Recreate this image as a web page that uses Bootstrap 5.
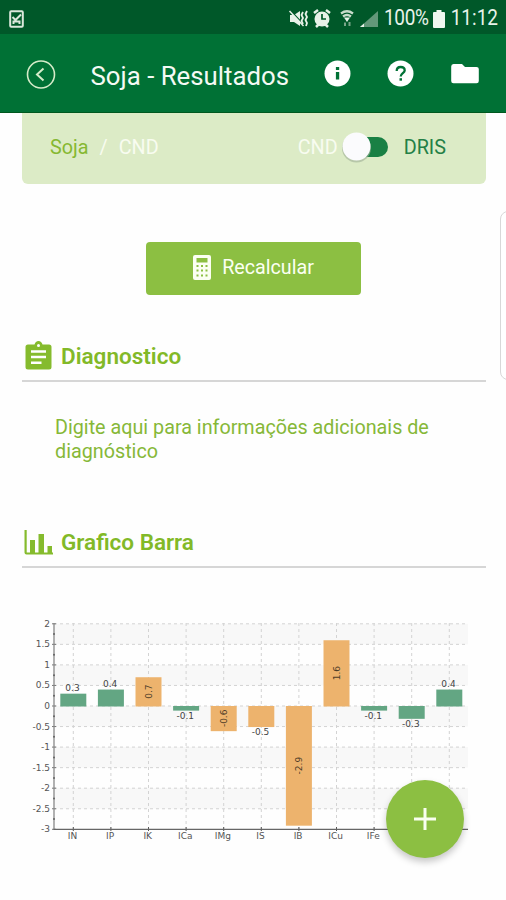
<!DOCTYPE html>
<html lang="pt-BR">
<head>
<meta charset="utf-8">
<meta name="viewport" content="width=device-width, initial-scale=1">
<title>Soja - Resultados</title>
<link href="https://cdn.jsdelivr.net/npm/bootstrap@5.3.0/dist/css/bootstrap.min.css" rel="stylesheet">
<style>
body{font-family:Roboto,"Liberation Sans",sans-serif;background:#fefefe;width:506px;height:900px;overflow:hidden}
svg{display:block;flex:none}
.status-strip{height:34px;background:#005829;color:#e8f2e9;padding:3px 8px 0 9px}
.status-strip .pct,.status-strip .clock{font-size:19px;margin-left:6px;transform:scaleY(1.12)}
.status-strip .pct{letter-spacing:-.3px}
.app-head{height:79px;background:#007135;border-bottom:1px solid #00581f;padding:0 26px}
.app-head h1{font-size:25.8px;font-weight:400;color:#f4faf4;margin:7px 0 0 34.500px;white-space:nowrap}
.method-box{height:71px;margin:0 20px 0 22px;background:#dcebc6;border-radius:0 0 6px 6px;padding:0 40px 3px 28px;font-size:19.8px}
.method-box span{padding-top:2px}
.method-box .pale{color:#f8fcf0}
.method-box .slash{margin:0 11px}
.lime{color:#86b832}
.forest{color:#248047}
.method-box .forest{margin-left:17px}
.switch-pill{width:45px;height:30px}
.recalc{width:215px;height:53px;background:#8cbf42;color:#fbfff2;border-radius:4px;margin:58px 0 0 146px;font-size:19.7px;padding:0 0 3px 0;border:0}
.recalc span{padding-top:2px;margin-left:11px}
.recalc:hover{background:#7fb338;color:#fff}
.section-title{margin:37px 20px 0 22px;border-bottom:2px solid #d6d6d6;height:50px;color:#82b928}
.section-title.second{margin-top:5px}
.section-title h2{font-size:22.5px;font-weight:600;margin:1px 0 0 6px;white-space:nowrap}
.note{margin:34px 40px 0 55px;height:97px;font-size:19.75px;line-height:24px;color:#86b838}
.edge-panel{position:absolute;left:500px;top:211px;width:20px;height:169px;border:1px solid #d8d8d8;border-radius:8px;background:#fff}
.chart{margin-left:22px;margin-top:32px}
.chart text{font-family:"DejaVu Sans",sans-serif;font-size:9px;fill:#555}
.fab{position:absolute;left:386px;top:780px;width:78px;height:78px;background:#8cbf42;box-shadow:0 4px 7px rgba(0,0,0,.22);border:0;padding:0}
</style>
<script src="https://cdn.jsdelivr.net/npm/bootstrap@5.3.0/dist/js/bootstrap.bundle.min.js"></script>
</head>
<body class="position-relative">
<div class="status-strip d-flex align-items-center">
  <svg width="15" height="18" viewBox="0 0 15 18"><rect x="1.2" y="1.2" width="12.6" height="15.6" rx="1" fill="none" stroke="#dbe8dc" stroke-width="2"/><path d="M3.500 7l3 3 5.500-5.500M4.500 14v-2.500h6V14" fill="none" stroke="#dbe8dc" stroke-width="2"/></svg>
  <svg class="ms-auto" width="90" height="20" viewBox="288 8 90 20" fill="#e8f2e9">
    <path d="M290 14h4l6-4v15l-6-4h-4z"/><path d="M290.500 9.500l14 15" stroke="#005829" stroke-width="1.500"/><path d="M289.500 10l14 15" stroke="#e8f2e9" stroke-width="1.500"/><path d="M303 11l-1.500 3 1.500 3-1.500 3 1.500 3M307 10l-1.500 3 1.500 3-1.500 3 1.500 3 -1 3" fill="none" stroke="#e8f2e9" stroke-width="1.800"/>
    <circle cx="322" cy="18" r="7.500"/><path d="M314 12l4-3M330 12l-4-3M316 26l3-3M328 26l-3-3" stroke="#e8f2e9" stroke-width="2.500"/><path d="M322 13v5h4" stroke="#005829" stroke-width="1.700" fill="none"/>
    <path d="M341 12.500q6-4.500 12 0M343 15.500q4-3 8 0" fill="none" stroke="#c8dccb" stroke-width="2.200"/><path d="M344 16.500h6L347 21z"/><path d="M345 25v-3.500M349.500 21v4" stroke="#78a588" stroke-width="2"/>
    <path d="M378 10v16h-18z" fill="#63987a"/><path d="M360 26l4-3.500V26z"/>
  </svg>
  <span class="pct">100%</span>
  <svg class="ms-1" width="12" height="18" viewBox="0 0 12 18" fill="#f0f7f0"><path d="M3.500 0h5v2H11q1 0 1 1v14q0 1-1 1H1q-1 0-1-1V3q0-1 1-1h2.500z"/></svg>
  <span class="clock">11:12</span>
</div>
<header class="app-head d-flex align-items-center">
  <svg class="mt-1" width="30" height="30" viewBox="0 0 30 30" fill="none" stroke="#d5ecc9"><circle cx="15" cy="14.500" r="13.500" stroke-width="1.600"/><path d="M17.500 8.500l-6.500 6 6.500 6" stroke-width="2"/></svg>
  <h1>Soja - Resultados</h1>
  <svg class="ms-auto" width="156" height="28" viewBox="324 59.500 156 28" fill="#fff"><circle cx="337.500" cy="74" r="13"/><path d="M335.900 67.500h3.300v3h-3.300zM335.900 72.500h3.300v7.500h-3.300z" fill="#007135"/><circle cx="400.500" cy="74" r="13"/><path d="M396.700 71.500q0-4 4-4t4 3.500c0 2.500-4 3-4 6" fill="none" stroke="#007135" stroke-width="2.300"/><path d="M399.500 78.700h2.500v2.500h-2.500z" fill="#007135"/><path d="M453.500 64.500h8.500l3 3h11.500q2.300 0 2.300 2v12q0 2.300-2.300 2.300h-23q-2.300 0-2.300-2.300v-14.500q0-2.500 2.300-2.500z"/></svg>
</header>
<main>
  <div class="method-box d-flex align-items-center">
    <span class="lime">Soja</span><span class="pale slash">/</span><span class="pale">CND</span>
    <span class="pale ms-auto me-1">CND</span>
    <svg class="switch-pill overflow-visible" viewBox="0 0 45 30"><rect x="8" y="5" width="38" height="20" rx="10" fill="#198044"/><ellipse cx="14.500" cy="16" rx="14.500" ry="14.500" fill="#9eaf96" opacity=".6"/><circle cx="14.500" cy="14.500" r="14" fill="#fbfbfd"/></svg>
    <span class="forest">DRIS</span>
  </div>
  <button class="btn recalc d-flex align-items-center justify-content-center" type="button">
    <svg width="18" height="25" viewBox="0 0 18 25"><rect width="18" height="25" rx="2" fill="#fbfff2"/><g fill="#8cbf42"><path d="M3.500 3h11v4.500h-11zM3.500 10h2v2h-2zM8 10h2v2H8zM12.500 10h2v2h-2zM3.500 14.500h2v2h-2zM8 14.500h2v2H8zM12.500 14.500h2v2h-2zM3.500 19.500h2v2h-2zM8 19.500h2v2H8zM12.500 19.500h2v2h-2z"/></g></svg>
    <span>Recalcular</span>
  </button>
  <section>
    <div class="section-title d-flex align-items-center">
      <svg width="33" height="30" viewBox="22 340.500 33 30"><path d="M28 344h6.500q1-3.500 4-3.500t4 3.500H49q2.500 0 2.500 2.500V366.500q0 2.500-2.500 2.500H28q-2.500 0-2.500-2.500V346.500q0-2.500 2.500-2.500z" fill="#85bb2d"/><circle cx="38.500" cy="345" r="1.500" fill="#fff"/><path d="M31 351h15M31 356.500h15M31 362.300h10.500" stroke="#fff" stroke-width="2.500"/></svg>
      <h2>Diagnostico</h2>
    </div>
    <p class="note">Digite aqui para informações adicionais de diagnóstico</p>
  </section>
  <section>
    <div class="section-title second d-flex align-items-center">
      <svg width="33" height="28" viewBox="22 528 33 28" fill="#85bb2d"><path d="M24.500 530h2.200v22.500H53v2H26.500q-2 0-2-2zM30 540h5v13h-5zM38.500 534h5.500v19h-5.500zM47.500 546h4.500v7h-4.500z"/></svg>
      <h2>Grafico Barra</h2>
    </div>
    <svg id="barChart" class="chart" width="464" height="250" viewBox="22 600 464 250" role="img"></svg>
  </section>
</main>
<div class="edge-panel"></div>
<button class="btn rounded-circle fab d-flex align-items-center justify-content-center" type="button" aria-label="Adicionar"><svg width="22" height="22" viewBox="0 0 22 22"><path d="M11 0v22M0 11h22" stroke="#f9fff0" stroke-width="3"/></svg></button>
<script>
const data=[["IN",.3],["IP",.4],["IK",.7],["ICa",-.1],["IMg",-.6],["IS",-.5],["IB",-2.9],["ICu",1.6],["IFe",-.1],["IMn",-.3],["IZn",.4]];
const inside=["IK","IMg","IB","ICu"], orange=[...inside,"IS"];
const yAt=v=>706-v*41.1, xAt=i=>73.300+i*37.600;
let s="";
for(let v=2;v>-3;v--) s+=`<rect x="54" y="${yAt(v)}" width="414" height="20.500" fill="#f8f8f8"/>`;
for(let k=0;k<=10;k++){
  const v=2-k*.5,y=yAt(v);
  if(k<10) s+=`<path d="M54 ${y}H468" stroke="#d3d3d3" stroke-dasharray="3 3"/><circle cx="54" cy="${y+10.3}" r="1" fill="#222"/>`;
  s+=`<path d="M52 ${y}h4" stroke="#777"/><text x="50" y="${y+3}" text-anchor="end">${v}</text>`;
}
data.forEach((d,i)=>{s+=`<path d="M${xAt(i)} 623V829" stroke="#d3d3d3" stroke-dasharray="3 3"/><path d="M${xAt(i)} 827v4" stroke="#555"/><text x="${xAt(i)-.8}" y="839" text-anchor="middle">${d[0]}</text>`});
s+='<path d="M54 623V829.500" stroke="#888" stroke-width="1.300" fill="none"/><path d="M53.500 829.300H468" stroke="#666" stroke-width="1.300"/>';
data.forEach(([n,v],i)=>{
  const y=Math.min(yAt(0),yAt(v)),h=Math.abs(v)*41.1,x=xAt(i);
  s+=`<rect x="${x-13}" y="${y}" width="26" height="${h+.5}" fill="${orange.includes(n)?"#edb36d":"#63a683"}"/>`;
  if(inside.includes(n)) s+=`<text transform="translate(${x+3.500} ${y+h/2}) rotate(-90)" text-anchor="middle" style="fill:#4d3c28">${v}</text>`;
  else s+=`<text x="${x-.8}" y="${v>0?y-3:y+h+8.500}" text-anchor="middle" style="fill:#444">${v}</text>`;
});
document.getElementById("barChart").innerHTML=s;
</script>
</body>
</html>
